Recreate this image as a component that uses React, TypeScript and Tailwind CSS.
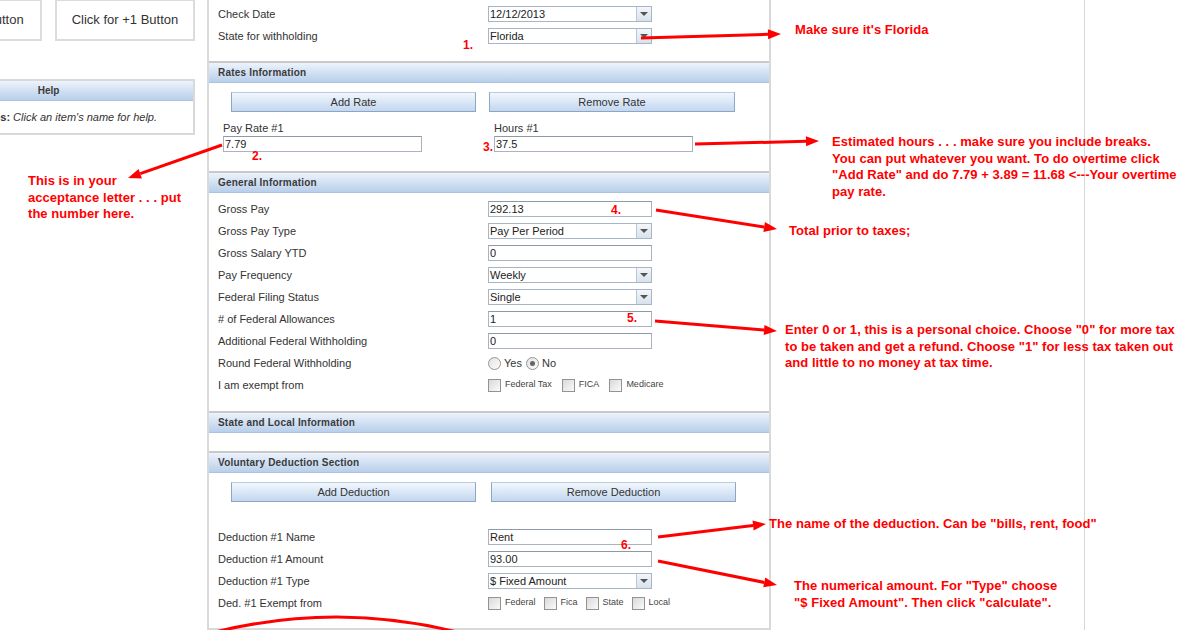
import type { ReactNode } from "react"

type Arrow = { x1: number; y1: number; x2: number; y2: number }

const arrows: Arrow[] = [
  { x1: 641, y1: 38, x2: 781, y2: 34 },
  { x1: 222, y1: 145, x2: 128, y2: 178 },
  { x1: 695, y1: 144, x2: 819, y2: 141 },
  { x1: 656, y1: 210, x2: 777, y2: 229 },
  { x1: 655, y1: 321, x2: 777, y2: 331 },
  { x1: 658, y1: 537, x2: 766, y2: 524 },
  { x1: 658, y1: 561, x2: 777, y2: 585 },
]

const notes = [
  { left: 795, top: 22, lines: ["Make sure it's Florida"] },
  {
    left: 832,
    top: 134,
    lines: [
      "Estimated hours . . . make sure you include breaks.",
      "You can put whatever you want. To do overtime click",
      "\"Add Rate\" and do 7.79 + 3.89 = 11.68 <---Your overtime",
      "pay rate.",
    ],
  },
  { left: 28, top: 173, lines: ["This is in your", "acceptance letter . . . put", "the number here."] },
  { left: 789, top: 223, lines: ["Total prior to taxes;"] },
  {
    left: 785,
    top: 322,
    lines: [
      "Enter 0 or 1, this is a personal choice. Choose \"0\" for more tax",
      "to be taken and get a refund. Choose \"1\" for less tax taken out",
      "and little to no money at tax time.",
    ],
  },
  { left: 769, top: 516, lines: ["The name of the deduction. Can be \"bills, rent, food\""] },
  {
    left: 794,
    top: 578,
    lines: ["The numerical amount. For \"Type\" choose", "\"$ Fixed Amount\". Then click \"calculate\"."],
  },
]

const numbers = [
  { label: "1.", left: 463, top: 38 },
  { label: "2.", left: 252, top: 149 },
  { label: "3.", left: 483, top: 140 },
  { label: "4.", left: 611, top: 203 },
  { label: "5.", left: 627, top: 311 },
  { label: "6.", left: 621, top: 538 },
]

function ArrowShape({ a }: { a: Arrow }) {
  const dx = a.x2 - a.x1
  const dy = a.y2 - a.y1
  const len = Math.hypot(dx, dy)
  const ux = dx / len
  const uy = dy / len
  const bx = a.x2 - ux * 13
  const by = a.y2 - uy * 13
  const px = -uy * 5
  const py = ux * 5
  return (
    <g>
      <line x1={a.x1} y1={a.y1} x2={bx} y2={by} stroke="#f00" strokeWidth={3} />
      <polygon
        points={`${a.x2},${a.y2} ${bx + px},${by + py} ${bx - px},${by - py}`}
        fill="#f00"
      />
    </g>
  )
}

function SectionHeader({ title }: { title: string }) {
  return (
    <div className="h-[22px] border-t-2 border-b border-t-[#c9c9c9] border-b-[#abc3de] bg-linear-to-b from-[#edf3fc] to-[#b8cfea] pl-[9px] flex items-center">
      <span className="text-[10px] font-bold text-[#3a3a3a] tracking-[0.2px]">{title}</span>
    </div>
  )
}

function BlueButton({ label, width }: { label: string; width: string }) {
  return (
    <div
      className={`${width} h-[20px] border border-[#8ea6c6] border-t-[#b9cbe0] bg-linear-to-b from-[#f2f7fd] to-[#c3d7ef] flex items-center justify-center text-[11px] text-[#333]`}
    >
      {label}
    </div>
  )
}

function Caret() {
  return <span className="h-0 w-0 border-x-[4px] border-t-[4px] border-x-transparent border-t-[#555]" />
}

function Select({ value }: { value: string }) {
  return (
    <div className="flex h-[16px] w-[164px] border border-[#a7b5c6] bg-white">
      <span className="flex-1 pl-px text-[11px] leading-[14px] text-[#222]">{value}</span>
      <span className="flex w-[15px] items-center justify-center border-l border-[#bac7d6] bg-linear-to-b from-[#f4f7fb] to-[#d8e1eb]">
        <Caret />
      </span>
    </div>
  )
}

function TextInput({ value, width = "w-[164px]" }: { value: string; width?: string }) {
  return (
    <div className={`${width} h-[16px] border border-[#aab3bf] border-t-[#8e99a8] bg-white pl-px text-[11px] leading-[14px] text-[#222]`}>
      {value}
    </div>
  )
}

function Check({ label, gap = "mr-[10px]" }: { label: string; gap?: string }) {
  return (
    <span className={`flex items-center ${gap}`}>
      <span className="h-[13px] w-[13px] border border-[#939393] bg-linear-to-br from-[#d9d9d9] to-[#fbfbfb]" />
      <span className="ml-[4px] text-[9px] text-[#444]">{label}</span>
    </span>
  )
}

function Radio({ checked, label }: { checked?: boolean; label: string }) {
  return (
    <span className="mr-[4px] flex items-center">
      <span className="flex h-[13px] w-[13px] items-center justify-center rounded-full border border-[#959595] bg-linear-to-br from-[#e2e2e2] to-[#fdfdfd]">
        {checked && <span className="h-[5px] w-[5px] rounded-full bg-[#666]" />}
      </span>
      <span className="ml-[3px] text-[11px] text-[#333]">{label}</span>
    </span>
  )
}

function Row({ label, children }: { label: string; children: ReactNode }) {
  return (
    <div className="grid h-[22px] grid-cols-[270px_1fr] items-center pl-[9px]">
      <span className="text-[11px] text-[#333]">{label}</span>
      <div className="flex items-center">{children}</div>
    </div>
  )
}

export default function App() {
  return (
    <div className="relative flex h-[630px] w-[1200px] overflow-hidden bg-white font-['Liberation_Sans',Arial,sans-serif]">
      {/* left column, partly cut off */}
      <div className="w-[207px] shrink-0">
        <div className="-ml-[98px] w-[293px]">
          <div className="-mt-px flex gap-[13px]">
            <div className="flex h-[42px] w-[140px] items-center justify-center border-2 border-[#dcdcdc] text-[13px] text-[#333]">
              Click for -1 Button
            </div>
            <div className="flex h-[42px] w-[140px] items-center justify-center border-2 border-[#dcdcdc] text-[13px] text-[#333]">
              Click for +1 Button
            </div>
          </div>
          <div className="mt-[38px] border-2 border-[#d9d9d9]">
            <div className="flex h-[20px] items-center justify-center border-b border-[#abc3de] bg-linear-to-b from-[#edf3fc] to-[#b8cfea] text-[10px] font-bold text-[#3a3a3a]">
              Help
            </div>
            <div className="flex h-[32px] items-center pl-[80px] text-[11px] text-[#333]">
              <span className="font-bold">Tips:</span>
              <span className="ml-[3px] italic">Click an item's name for help.</span>
            </div>
          </div>
        </div>
      </div>

      {/* main form panel */}
      <div className="h-[630px] w-[564px] shrink-0 border-x-2 border-b-2 border-[#d9d9d9]">
        <div className="h-[61px] pt-[3px]">
          <Row label="Check Date">
            <Select value="12/12/2013" />
          </Row>
          <Row label="State for withholding">
            <Select value="Florida" />
          </Row>
        </div>

        <SectionHeader title="Rates Information" />
        <div className="h-[88px] pt-[9px]">
          <div className="flex gap-[13px] pl-[22px]">
            <BlueButton label="Add Rate" width="w-[245px]" />
            <BlueButton label="Remove Rate" width="w-[246px]" />
          </div>
          <div className="mt-[10px] flex gap-[72px] pl-[14px]">
            <div>
              <div className="text-[11px] leading-[13px] text-[#333]">Pay Rate #1</div>
              <div className="mt-px">
                <TextInput value="7.79" width="w-[199px]" />
              </div>
            </div>
            <div>
              <div className="text-[11px] leading-[13px] text-[#333]">Hours #1</div>
              <div className="mt-px">
                <TextInput value="37.5" width="w-[199px]" />
              </div>
            </div>
          </div>
        </div>

        <SectionHeader title="General Information" />
        <div className="h-[218px] pt-[5px]">
          <Row label="Gross Pay">
            <TextInput value="292.13" />
          </Row>
          <Row label="Gross Pay Type">
            <Select value="Pay Per Period" />
          </Row>
          <Row label="Gross Salary YTD">
            <TextInput value="0" />
          </Row>
          <Row label="Pay Frequency">
            <Select value="Weekly" />
          </Row>
          <Row label="Federal Filing Status">
            <Select value="Single" />
          </Row>
          <Row label="# of Federal Allowances">
            <TextInput value="1" />
          </Row>
          <Row label="Additional Federal Withholding">
            <TextInput value="0" />
          </Row>
          <Row label="Round Federal Withholding">
            <Radio label="Yes" />
            <Radio label="No" checked />
          </Row>
          <Row label="I am exempt from">
            <Check label="Federal Tax" />
            <Check label="FICA" />
            <Check label="Medicare" />
          </Row>
        </div>

        <SectionHeader title="State and Local Information" />
        <div className="h-[18px]" />

        <SectionHeader title="Voluntary Deduction Section" />
        <div className="pt-[9px]">
          <div className="flex gap-[15px] pl-[22px]">
            <BlueButton label="Add Deduction" width="w-[245px]" />
            <BlueButton label="Remove Deduction" width="w-[245px]" />
          </div>
          <div className="mt-[24px]">
            <Row label="Deduction #1 Name">
              <TextInput value="Rent" />
            </Row>
            <Row label="Deduction #1 Amount">
              <TextInput value="93.00" />
            </Row>
            <Row label="Deduction #1 Type">
              <Select value="$ Fixed Amount" />
            </Row>
            <Row label="Ded. #1 Exempt from">
              <Check label="Federal" gap="mr-[8px]" />
              <Check label="Fica" gap="mr-[8px]" />
              <Check label="State" gap="mr-[8px]" />
              <Check label="Local" gap="mr-[8px]" />
            </Row>
          </div>
        </div>
      </div>

      {/* empty area with the page edge line */}
      <div className="h-[630px] w-[314px] shrink-0 border-r border-[#d6d6d6]" />

      {/* red annotations drawn over the screenshot */}
      <svg className="pointer-events-none absolute left-0 top-0" width={1200} height={630}>
        {arrows.map((a, i) => (
          <ArrowShape key={i} a={a} />
        ))}
        <path d="M 200 636 Q 337 598 472 636" stroke="#f00" strokeWidth={3} fill="none" />
      </svg>

      {notes.map((n, i) => (
        <div
          key={i}
          className="pointer-events-none absolute whitespace-nowrap text-[13px] font-bold leading-[16.7px] tracking-[0.05px] text-[#f00]"
          style={{ left: n.left, top: n.top }}
        >
          {n.lines.map((l, j) => (
            <div key={j}>{l}</div>
          ))}
        </div>
      ))}

      {numbers.map((n, i) => (
        <div
          key={i}
          className="pointer-events-none absolute text-[12px] font-bold leading-[14px] text-[#f00]"
          style={{ left: n.left, top: n.top }}
        >
          {n.label}
        </div>
      ))}
    </div>
  )
}
